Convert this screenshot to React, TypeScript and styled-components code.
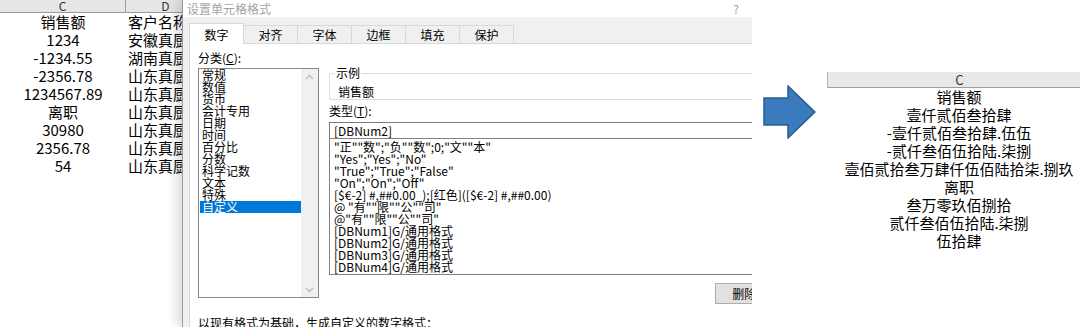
import React from 'react';
import styled, { createGlobalStyle } from 'styled-components';

const GlobalStyle = createGlobalStyle`
    body {
        margin: 0;
        overflow: hidden;
        background: #fff;
    }
`;

const Page = styled.div`
    display: flex;
    align-items: flex-start;
    width: 1080px;
    height: 336px;
    overflow: hidden;
    background: #fff;
    color: #000;
    font-family: "Noto Sans CJK SC", sans-serif;
`;

const Shot = styled.div`
    display: flex;
    flex: none;
    width: 752px;
    height: 327px;
    overflow: hidden;
`;

// spreadsheet behind the dialog
const Sheet = styled.div`
    flex: none;
    width: 182px;
    overflow: hidden;
`;

const SheetHeader = styled.div`
    display: flex;
    height: 12px;
    background: #e6e6e6;
    border-bottom: 1px solid #9b9b9b;
    font-size: 12px;
    line-height: 11px;
    color: #333;
`;

const HeadCell = styled.div<{ $w: number }>`
    flex: none;
    width: ${p => p.$w}px;
    box-sizing: border-box;
    text-align: center;
    border-right: 1px solid #9b9b9b;
`;

const SheetRow = styled.div`
    display: flex;
    height: 18px;
    font-size: 15px;
    line-height: 18px;
    white-space: nowrap;
`;

const Cell = styled.div<{ $w: number; $left?: boolean }>`
    flex: none;
    width: ${p => p.$w}px;
    box-sizing: border-box;
    text-align: ${p => (p.$left ? 'left' : 'center')};
    padding-left: ${p => (p.$left ? '2px' : '0')};
    overflow: hidden;
`;

// format cells dialog
const Dialog = styled.div`
    position: relative;
    z-index: 1;
    flex: none;
    display: flex;
    flex-direction: column;
    width: 570px;
    height: 327px;
    border-left: 1px solid #9a9a9a;
    background: #f0f0f0;
    box-shadow: -6px 0 10px rgba(0, 0, 0, 0.13);
    overflow: hidden;
`;

const TitleBar = styled.div`
    display: flex;
    align-items: center;
    justify-content: space-between;
    height: 22px;
    padding: 0 14px 0 4px;
    background: #fff;
    font-size: 12px;
    color: #a3a3a3;
`;

const Body = styled.div`
    flex: 1;
    display: flex;
    flex-direction: column;
    padding: 6px 0 0 6px;
`;

const TabStrip = styled.div`
    display: flex;
    align-items: flex-end;
    height: 20px;
`;

const Tab = styled.div<{ $active?: boolean }>`
    position: relative;
    z-index: ${p => (p.$active ? 1 : 0)};
    width: 55px;
    height: ${p => (p.$active ? '21px' : '18px')};
    margin: 0 -1px ${p => (p.$active ? '-1px' : '0')} 0;
    box-sizing: border-box;
    border: 1px solid #d9d9d9;
    border-bottom: none;
    background: ${p => (p.$active ? '#fff' : '#f0f0f0')};
    font-size: 12px;
    line-height: ${p => (p.$active ? '21px' : '17px')};
    text-align: center;
`;

const Panel = styled.div`
    flex: 1;
    display: flex;
    flex-direction: column;
    padding: 7px 0 0 8px;
    background: #fff;
    border-top: 1px solid #d9d9d9;
    border-left: 1px solid #d9d9d9;
    font-size: 12px;
`;

const Columns = styled.div`
    display: flex;
    gap: 10px;
`;

const LeftCol = styled.div`
    flex: none;
    width: 121px;
    display: flex;
    flex-direction: column;
`;

const Label = styled.div`
    line-height: 14px;
    white-space: nowrap;
`;

const ListBox = styled.div`
    display: flex;
    height: 230px;
    margin-top: 3px;
    box-sizing: border-box;
    border: 1px solid #828790;
`;

const ListItems = styled.div`
    flex: 1;
    padding-left: 1px;
`;

const ListItem = styled.div<{ $selected?: boolean }>`
    height: 12px;
    line-height: 12px;
    padding-left: 2px;
    white-space: nowrap;
    background: ${p => (p.$selected ? '#0078d7' : 'transparent')};
    color: ${p => (p.$selected ? '#fff' : '#000')};
`;

const ScrollBar = styled.div`
    flex: none;
    width: 17px;
    display: flex;
    flex-direction: column;
    justify-content: space-between;
    align-items: center;
    padding: 5px 0 4px;
    background: #f0f0f0;
`;

const RightCol = styled.div`
    flex: none;
    width: 461px;
    display: flex;
    flex-direction: column;
`;

const GroupBox = styled.div`
    position: relative;
    height: 27px;
    margin-top: 22px;
    box-sizing: border-box;
    border: 1px solid #dcdcdc;
    border-radius: 2px;
    padding: 12px 0 0 8px;
    line-height: 12px;
`;

const GroupLegend = styled.span`
    position: absolute;
    top: -8px;
    left: 5px;
    padding: 0 1px;
    background: #fff;
    line-height: 14px;
`;

const TypeLabel = styled(Label)`
    margin-top: 5px;
    line-height: 12px;
`;

const TypeInput = styled.div`
    height: 17px;
    margin-top: 5px;
    box-sizing: border-box;
    border: 1px solid #7a7a7a;
    padding-left: 4px;
    line-height: 15px;
`;

const FormatList = styled.div`
    height: 137px;
    margin-top: -1px;
    box-sizing: border-box;
    border: 1px solid #828282;
    padding: 2px 0 0 4px;
`;

const FormatItem = styled.div`
    height: 12px;
    line-height: 12px;
    white-space: nowrap;
`;

const Button = styled.div`
    align-self: flex-end;
    width: 75px;
    height: 21px;
    margin-top: 8px;
    box-sizing: border-box;
    border: 1px solid #adadad;
    background: #e1e1e1;
    line-height: 19px;
    text-align: center;
`;

const Note = styled.div`
    margin-top: 12px;
    line-height: 14px;
    white-space: nowrap;
`;

// arrow + result sheet
const ArrowBox = styled.div`
    flex: none;
    margin: 85px 0 0 11px;
    line-height: 0;
`;

const ResultSheet = styled.div`
    flex: none;
    width: 264px;
    margin: 72px 0 0 11px;
`;

const ResultHeader = styled.div`
    height: 16px;
    box-sizing: border-box;
    background: #e8e8e8;
    border-left: 1px solid #b5b5b5;
    border-bottom: 1px solid #9e9e9e;
    font-size: 13px;
    line-height: 15px;
    text-align: center;
    color: #333;
`;

const ResultRow = styled.div`
    height: 18px;
    font-size: 15px;
    line-height: 18px;
    text-align: center;
    white-space: nowrap;
`;

const sheetRows: [string, string][] = [
    ['销售额', '客户名称'],
    ['1234', '安徽真厨房'],
    ['-1234.55', '湖南真厨房'],
    ['-2356.78', '山东真厨房'],
    ['1234567.89', '山东真厨房'],
    ['离职', '山东真厨房'],
    ['30980', '山东真厨房'],
    ['2356.78', '山东真厨房'],
    ['54', '山东真厨房'],
];

const categories = ['常规', '数值', '货币', '会计专用', '日期', '时间', '百分比', '分数', '科学记数', '文本', '特殊', '自定义'];

const formats = [
    '"正""数";"负""数";0;"文""本"',
    '"Yes";"Yes";"No"',
    '"True";"True";"False"',
    '"On";"On";"Off"',
    '[$€-2] #,##0.00_);[红色]([$€-2] #,##0.00)',
    '@ "有""限""公""司"',
    '@"有""限""公""司"',
    '[DBNum1]G/通用格式',
    '[DBNum2]G/通用格式',
    '[DBNum3]G/通用格式',
    '[DBNum4]G/通用格式',
];

const tabs = ['数字', '对齐', '字体', '边框', '填充', '保护'];

const results = [
    '销售额',
    '壹仟贰佰叁拾肆',
    '-壹仟贰佰叁拾肆.伍伍',
    '-贰仟叁佰伍拾陆.柒捌',
    '壹佰贰拾叁万肆仟伍佰陆拾柒.捌玖',
    '离职',
    '叁万零玖佰捌拾',
    '贰仟叁佰伍拾陆.柒捌',
    '伍拾肆',
];

const Chevron = ({ up }: { up?: boolean }) => (
    <svg width="9" height="6" viewBox="0 0 9 6">
        <polyline
            points={up ? '1,5 4.5,1.5 8,5' : '1,1 4.5,4.5 8,1'}
            fill="none"
            stroke="#c2c2c2"
            strokeWidth="1.6"
        />
    </svg>
);

export default function App() {
    return (
        <Page>
            <GlobalStyle />
            <Shot>
                <Sheet>
                    <SheetHeader>
                        <HeadCell $w={126}>C</HeadCell>
                        <HeadCell $w={80}>D</HeadCell>
                    </SheetHeader>
                    {sheetRows.map(([c, d], i) => (
                        <SheetRow key={i}>
                            <Cell $w={126}>{c}</Cell>
                            <Cell $w={80} $left>{d}</Cell>
                        </SheetRow>
                    ))}
                </Sheet>
                <Dialog>
                    <TitleBar>
                        <span>设置单元格格式</span>
                        <span>?</span>
                    </TitleBar>
                    <Body>
                        <TabStrip>
                            {tabs.map((t, i) => (
                                <Tab key={t} $active={i === 0}>{t}</Tab>
                            ))}
                        </TabStrip>
                        <Panel>
                            <Columns>
                                <LeftCol>
                                    <Label>分类(<u>C</u>):</Label>
                                    <ListBox>
                                        <ListItems>
                                            {categories.map(c => (
                                                <ListItem key={c} $selected={c === '自定义'}>{c}</ListItem>
                                            ))}
                                        </ListItems>
                                        <ScrollBar>
                                            <Chevron up />
                                            <Chevron />
                                        </ScrollBar>
                                    </ListBox>
                                </LeftCol>
                                <RightCol>
                                    <GroupBox>
                                        <GroupLegend>示例</GroupLegend>
                                        销售额
                                    </GroupBox>
                                    <TypeLabel>类型(<u>T</u>):</TypeLabel>
                                    <TypeInput>[DBNum2]</TypeInput>
                                    <FormatList>
                                        {formats.map((f, i) => (
                                            <FormatItem key={i}>{f}</FormatItem>
                                        ))}
                                    </FormatList>
                                    <Button>删除(D)</Button>
                                </RightCol>
                            </Columns>
                            <Note>以现有格式为基础，生成自定义的数字格式：</Note>
                        </Panel>
                    </Body>
                </Dialog>
            </Shot>
            <ArrowBox>
                <svg width="53" height="54" viewBox="0 0 53 54">
                    <polygon
                        points="1,13 25,13 25,1 52,27 25,53 25,40 1,40"
                        fill="#3a7bbd"
                        stroke="#2b5d8e"
                        strokeWidth="1.5"
                    />
                </svg>
            </ArrowBox>
            <ResultSheet>
                <ResultHeader>C</ResultHeader>
                {results.map((r, i) => (
                    <ResultRow key={i}>{r}</ResultRow>
                ))}
            </ResultSheet>
        </Page>
    );
}
